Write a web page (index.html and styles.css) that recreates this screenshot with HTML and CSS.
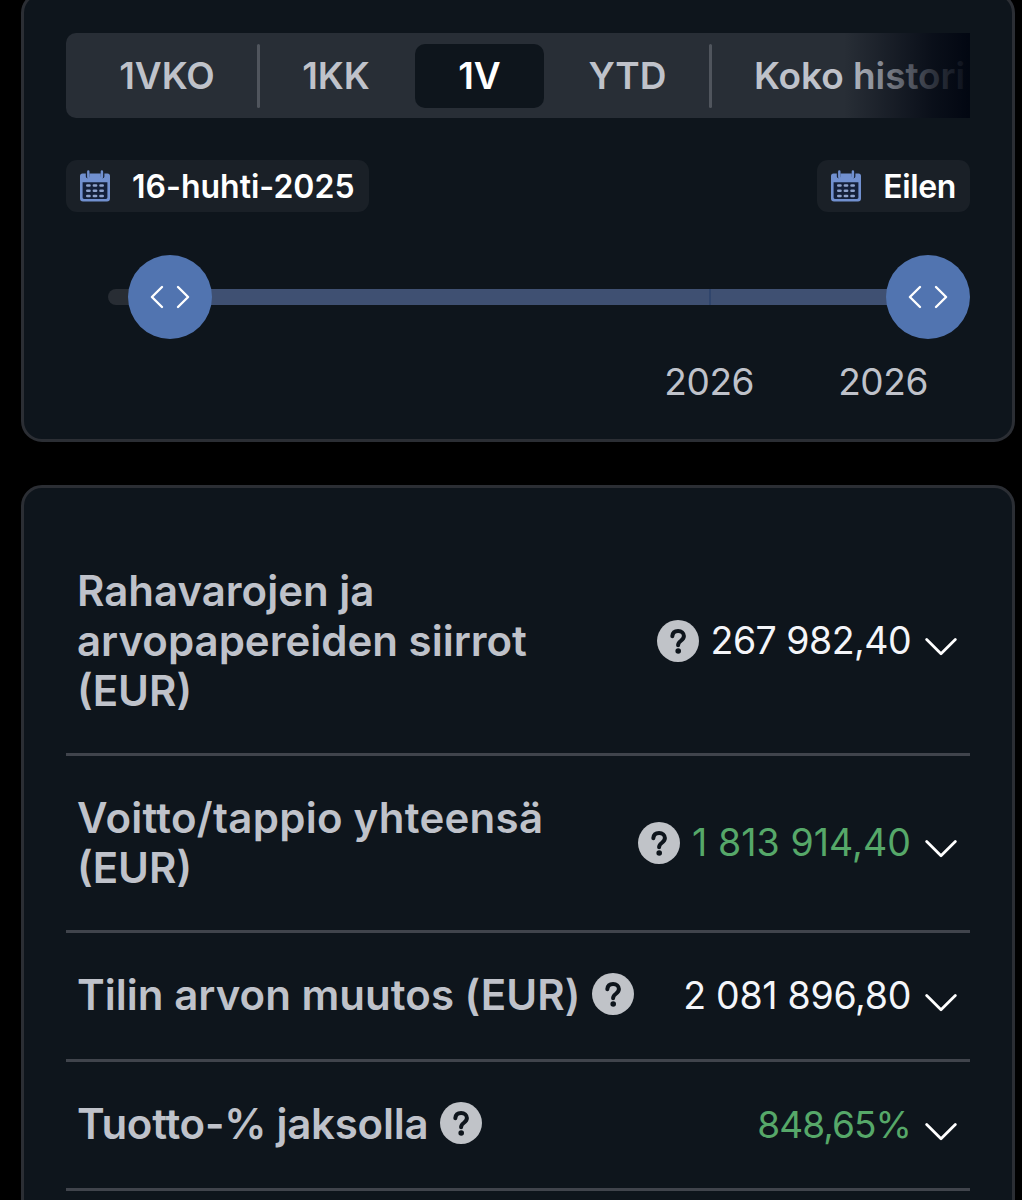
FILE: index.html
```html
<!DOCTYPE html>
<html lang="fi">
<head>
  <meta charset="UTF-8" />
  <meta name="viewport" content="width=device-width, initial-scale=1.0"/>
  <title>Tuotto</title>
  <link rel="stylesheet" href="styles.css">
</head>
<body>

<!-- shared icons -->
<svg class="sprite" width="0" height="0">
  <symbol id="calendar" viewBox="0 0 32 32">
    <path class="cal-inner" d="M3 11H29V30H3Z"/>
    <path class="cal-body" fill-rule="evenodd" d="M3.5 3.5H28.5Q31 3.5 31 6V28.5Q31 31.5 28 31.5H4Q1 31.5 1 28.5V6Q1 3.5 3.5 3.5ZM3.6 12.3V27.6Q3.6 29 5 29H27Q28.4 29 28.4 27.6V12.3Z"/>
    <path class="cal-gap" d="M8.6 3V6.5M23.6 3V6.5"/>
    <path class="cal-pin" d="M9.3 1.5V7M22.9 1.5V7"/>
    <path class="cal-dots" d="M8.3 15.5h2.2M14.9 15.5h2.2M21.5 15.5h2.2M8.3 20.7h2.2M14.9 20.7h2.2M21.5 20.7h2.2M8.3 26h2.2M14.9 26h2.2M21.5 26h2.2"/>
  </symbol>
  <symbol id="help" viewBox="0 0 42 42">
    <circle class="help-bg" cx="21" cy="21" r="21"/>
    <path class="help-mark" d="M15.3 16.2C15.6 12.8 18 11 21.1 11C24.5 11 26.9 13.1 26.9 16.1C26.9 18.5 25.5 19.7 23.7 21C21.9 22.3 21.1 23.2 21.1 25.3"/>
    <circle class="help-dot" cx="21.2" cy="31" r="2.8"/>
  </symbol>
  <symbol id="chevron" viewBox="0 0 32 20">
    <path class="stroke" d="M1.7 2.5L16 16.7L30.3 2.5"/>
  </symbol>
  <symbol id="handle" viewBox="0 0 40 24">
    <path class="stroke thin" d="M12 2L1.9 12L12 22M28 2L38.1 12L28 22"/>
  </symbol>
</svg>

<div class="card period">
  <div class="tabs">
    <button class="tab week">1VKO</button>
    <span class="divider"></span>
    <button class="tab month">1KK</button>
    <button class="tab year active">1V</button>
    <button class="tab ytd">YTD</button>
    <span class="divider"></span>
    <button class="tab all">Koko histori</button>
  </div>

  <div class="dates">
    <button class="date"><svg class="calendar"><use href="#calendar"/></svg><span class="from">16-huhti-2025</span></button>
    <button class="date"><svg class="calendar"><use href="#calendar"/></svg><span class="to">Eilen</span></button>
  </div>

  <div class="slider">
    <div class="track">
      <div class="range"></div>
      <div class="tick"></div>
      <div class="thumb start"><svg><use href="#handle"/></svg></div>
      <div class="thumb end"><svg><use href="#handle"/></svg></div>
    </div>
  </div>

  <div class="years">
    <span>2026</span>
    <span>2026</span>
  </div>
</div>

<div class="card summary">
  <div class="row">
    <div class="label">Rahavarojen ja<br>arvopapereiden siirrot<br>(EUR)</div>
    <div class="amount">
      <svg class="help"><use href="#help"/></svg>
      <span class="value">267 982,40</span>
      <svg class="chevron"><use href="#chevron"/></svg>
    </div>
  </div>
  <div class="row two-lines">
    <div class="label"><span class="profit-label">Voitto/tappio yhteensä</span><br>(EUR)</div>
    <div class="amount">
      <svg class="help"><use href="#help"/></svg>
      <span class="value positive profit">1 813 914,40</span>
      <svg class="chevron"><use href="#chevron"/></svg>
    </div>
  </div>
  <div class="row single">
    <div class="label"><span class="change-label">Tilin arvon muutos (EUR)</span><svg class="help"><use href="#help"/></svg></div>
    <div class="amount">
      <span class="value change">2 081 896,80</span>
      <svg class="chevron"><use href="#chevron"/></svg>
    </div>
  </div>
  <div class="row single">
    <div class="label"><span class="return-label">Tuotto-% jaksolla</span><svg class="help"><use href="#help"/></svg></div>
    <div class="amount">
      <span class="value positive return">848,65%</span>
      <svg class="chevron"><use href="#chevron"/></svg>
    </div>
  </div>
</div>

</body>
</html>
```
FILE: styles.css
```css
* {
  box-sizing: border-box;
}

html {
  overflow: hidden;
}

body {
  font-family: Inter, 'Liberation Sans', sans-serif;
  background: #000;
  color: #bfc2ca;
  margin: 0;
  height: 1200px;
  overflow: hidden;
  display: flex;
  flex-direction: column;
  gap: 43px;
}

button {
  font-family: inherit;
  border: none;
  padding: 0;
  cursor: pointer;
}

svg {
  display: block;
  flex: none;
}

.sprite {
  position: absolute;
}

.card {
  flex: none;
  width: 994px;
  margin-left: 21px;
  background: #0e151c;
  border: 3px solid #2b2e34;
  border-radius: 21px;
}

.period {
  height: 450px;
  margin-top: -8px;
  padding: 38px 42px 0;
}

/* period tabs */
.tabs {
  position: relative;
  display: flex;
  align-items: center;
  height: 85px;
  padding-left: 11px;
  background: #282e36;
  border-radius: 10px 0 0 10px;
  overflow: hidden;
}

.tabs::after {
  content: "";
  position: absolute;
  top: 0;
  right: 0;
  width: 126px;
  height: 100%;
  background: linear-gradient(to right, rgba(0, 5, 16, 0), rgba(0, 5, 16, 0.75) 70%, rgba(0, 5, 16, 0.96));
}

.tab {
  flex: none;
  height: 64px;
  font-size: 37px;
  font-weight: 600;
  color: #bfc2ca;
  background: none;
  border-radius: 10px;
  white-space: nowrap;
}

.week {
  width: 180px;
}

.month {
  width: 152px;
}

.year {
  width: 129px;
  margin: 0 2px 0 3px;
}

.ytd {
  width: 163px;
}

.all {
  padding-left: 42px;
  letter-spacing: -0.05px;
}

.tab.active {
  background: #0e151c;
  color: #fff;
}

.divider {
  flex: none;
  width: 3px;
  height: 64px;
  border-radius: 2px;
  background: #50555d;
}

/* date range */
.dates {
  display: flex;
  justify-content: space-between;
  margin-top: 42px;
}

.date {
  display: flex;
  align-items: center;
  gap: 21px;
  height: 52px;
  padding: 0 14px 0 13px;
  background: #1a2027;
  border-radius: 11px;
  color: #fff;
  font-size: 32px;
  font-weight: 600;
}

.to {
  letter-spacing: -0.4px;
}

.calendar {
  width: 32px;
  height: 32px;
}

.cal-body {
  fill: #7190cf;
}

.cal-inner {
  fill: #14203a;
}

.cal-gap {
  stroke: #1a2335;
  stroke-width: 3.6;
  stroke-linecap: round;
}

.cal-pin {
  stroke: #7190cf;
  stroke-width: 2.4;
  stroke-linecap: round;
}

.cal-dots {
  stroke: #8ea2cc;
  stroke-width: 2.6;
  stroke-linecap: round;
}

/* slider */
.slider {
  height: 84px;
  margin-top: 43px;
  padding: 34px 42px 0;
}

.track {
  position: relative;
  height: 16px;
  border-radius: 8px;
  background: #282d34;
}

.range {
  height: 16px;
  margin-left: 62px;
  background: #3f5072;
}

.tick {
  position: absolute;
  left: 601px;
  top: 0;
  width: 2px;
  height: 16px;
  background: #30456c;
}

.thumb {
  position: absolute;
  top: -34px;
  display: flex;
  align-items: center;
  justify-content: center;
  width: 84px;
  height: 84px;
  border-radius: 50%;
  background: #5174b0;
}

.thumb svg {
  width: 40px;
  height: 24px;
}

.start {
  left: 20.4px;
}

.end {
  right: -42px;
}

.stroke {
  fill: none;
  stroke: #fff;
  stroke-width: 2.8;
  stroke-linecap: round;
  stroke-linejoin: round;
}

.thin {
  stroke-width: 2.4;
}

.years {
  display: flex;
  justify-content: flex-end;
  gap: 84px;
  margin-top: 20px;
  padding-right: 42px;
  font-size: 37px;
  letter-spacing: -0.4px;
  line-height: 46px;
}

/* summary rows */
.summary {
  height: 760px;
  padding: 40px 42px 0;
}

.row {
  display: flex;
  justify-content: space-between;
  height: 228px;
  padding: 37px 13px 0 11px;
  border-bottom: 3px solid #40444c;
}

.two-lines {
  height: 177px;
  padding-top: 36px;
}

.single {
  height: 129px;
  padding-top: 35px;
}

.label {
  padding-top: 1px;
  font-size: 42px;
  font-weight: 600;
  line-height: 50.2px;
  white-space: nowrap;
}

.single .label {
  display: flex;
  gap: 12px;
  padding-top: 2px;
}

.single .help {
  margin-top: 3px;
}

.profit-label {
  letter-spacing: 0.27px;
}

.change-label {
  letter-spacing: 0.03px;
}

.return-label {
  letter-spacing: -0.25px;
}

.help {
  width: 42px;
  height: 42px;
}

.help-bg {
  fill: #c0c3c8;
}

.help-mark {
  fill: none;
  stroke: #0e151c;
  stroke-width: 4;
  stroke-linecap: round;
}

.help-dot {
  fill: #0e151c;
}

.amount {
  display: flex;
  align-items: center;
  height: 151px;
  color: #f4f5f9;
}

.two-lines .amount {
  height: 101px;
}

.single .amount {
  height: 54px;
}

.value {
  margin-left: 12px;
  font-size: 37.5px;
  letter-spacing: -0.55px;
  line-height: 46px;
  white-space: nowrap;
}

.profit {
  letter-spacing: 0.07px;
}

.change {
  letter-spacing: -0.3px;
}

.return {
  font-size: 37px;
  letter-spacing: -0.95px;
}

.single .value {
  padding-top: 2px;
}

.positive {
  color: #56a869;
}

.chevron {
  width: 32px;
  height: 20px;
  margin: 13px 0 0 14px;
}

.single .chevron {
  margin-top: 15px;
}
```
